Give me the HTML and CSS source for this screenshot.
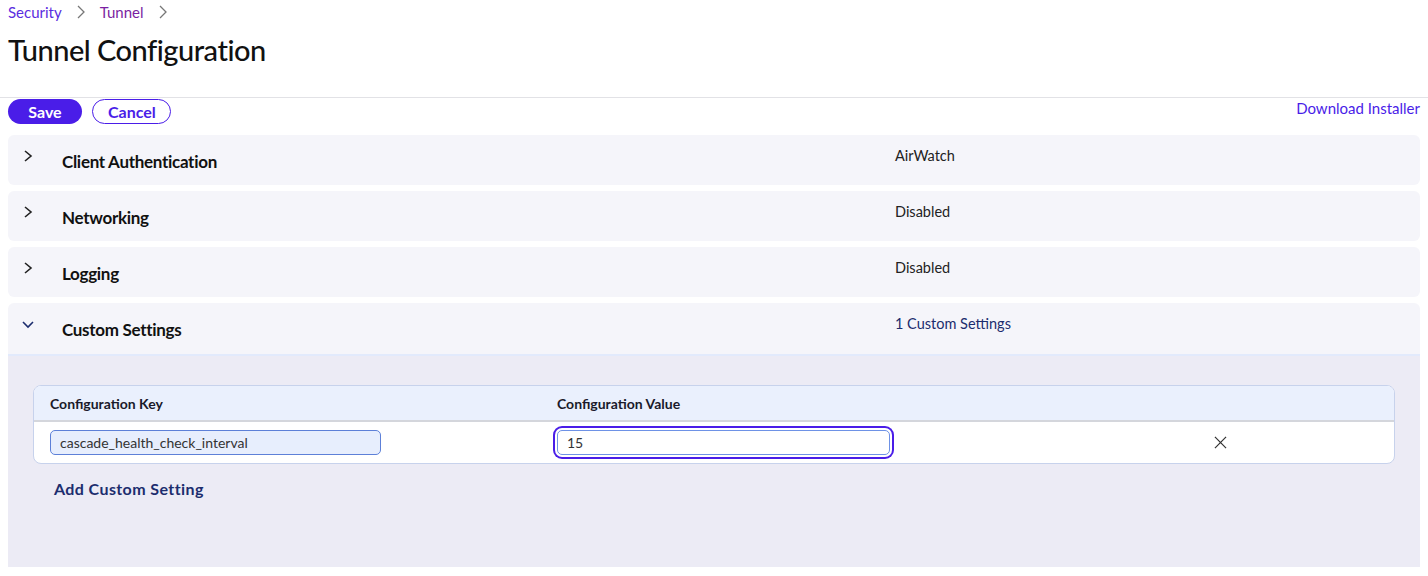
FILE: index.html
```html
<!DOCTYPE html>
<html lang="en">
<head>
  <meta charset="UTF-8" />
  <title>Tunnel Configuration</title>
  <link rel="stylesheet" href="styles.css">
</head>
<body>

  <!-- Header -->
  <div class="page-head">
    <nav class="crumbs">
      <a href="#" class="crumb">Security</a>
      <svg class="crumb-sep" viewBox="0 0 10 14"><path d="M2 1l6 6-6 6" /></svg>
      <a href="#" class="crumb current">Tunnel</a>
      <svg class="crumb-sep" viewBox="0 0 10 14"><path d="M2 1l6 6-6 6" /></svg>
    </nav>
    <h1>Tunnel Configuration</h1>
  </div>

  <!-- Toolbar -->
  <div class="toolbar">
    <div class="actions">
      <button class="btn primary">Save</button>
      <button class="btn outline">Cancel</button>
    </div>
    <a href="#" class="download">Download Installer</a>
  </div>

  <!-- Sections -->
  <div class="sections">
    <div class="section">
      <div class="section-head">
        <svg class="chev" viewBox="0 0 12 12"><path d="M3 1l6 5-6 5" /></svg>
        <span class="section-title">Client Authentication</span>
        <span class="section-value">AirWatch</span>
      </div>
    </div>

    <div class="section">
      <div class="section-head">
        <svg class="chev" viewBox="0 0 12 12"><path d="M3 1l6 5-6 5" /></svg>
        <span class="section-title">Networking</span>
        <span class="section-value">Disabled</span>
      </div>
    </div>

    <div class="section">
      <div class="section-head">
        <svg class="chev" viewBox="0 0 12 12"><path d="M3 1l6 5-6 5" /></svg>
        <span class="section-title">Logging</span>
        <span class="section-value">Disabled</span>
      </div>
    </div>

    <div class="section open">
      <div class="section-head">
        <svg class="chev" viewBox="0 0 12 12"><path d="M1 4l5 5 5-5" /></svg>
        <span class="section-title">Custom Settings</span>
        <span class="section-value link">1 Custom Settings</span>
      </div>
      <div class="section-body">
        <div class="kv-table">
          <div class="kv-row kv-header">
            <div class="kv-key">Configuration Key</div>
            <div class="kv-val">Configuration Value</div>
            <div class="kv-del"></div>
          </div>
          <div class="kv-row">
            <div class="kv-key"><input class="field filled" type="text" value="cascade_health_check_interval" /></div>
            <div class="kv-val"><input class="field focused" type="text" value="15" /></div>
            <div class="kv-del">
              <svg class="x-icon" viewBox="0 0 14 14"><path d="M1 1l12 12M13 1L1 13" /></svg>
            </div>
          </div>
        </div>
        <a href="#" class="add-setting">Add Custom Setting</a>
      </div>
    </div>
  </div>

</body>
</html>
```

FILE: styles.css
```css
body {
  margin: 0;
  font-family: 'Lato', 'Noto Sans', sans-serif;
  color: #111;
  background: #fff;
}

a {
  text-decoration: none;
}

.page-head {
  padding: 2px 8px 0;
  height: 95px;
  border-bottom: 1px solid #e2e2e6;
}

.crumbs {
  display: flex;
  align-items: center;
  font-size: 15px;
  height: 20px;
}

.crumb {
  color: #5a2de0;
}

.crumb.current {
  color: #7b1fa2;
}

.crumb-sep {
  width: 10px;
  height: 14px;
  fill: none;
  stroke: #777;
  stroke-width: 1.3;
  margin: 0 14px;
}

h1 {
  margin: 10px 0 0;
  font-size: 29px;
  font-weight: 500;
  letter-spacing: -0.5px;
}

.toolbar {
  display: flex;
  justify-content: space-between;
  align-items: flex-start;
  padding: 1px 8px 0;
}

.actions {
  display: flex;
  gap: 10px;
}

.btn {
  font-family: inherit;
  font-size: 16px;
  font-weight: 700;
  height: 25px;
  border-radius: 13px;
  padding: 0 15px;
  cursor: pointer;
}

.btn.primary {
  background: #4a1de8;
  color: #fff;
  border: none;
  width: 74px;
}

.btn.outline {
  background: #fff;
  color: #4a1de8;
  border: 1.5px solid #4a1de8;
  width: 79px;
}

.download {
  color: #4a1de8;
  font-size: 15px;
}

.sections {
  padding: 11px 8px 0;
  display: flex;
  flex-direction: column;
  gap: 6px;
}

.section-head {
  display: flex;
  align-items: flex-start;
  height: 50px;
  box-sizing: border-box;
  background: #f5f5fa;
  border-radius: 6px;
  padding: 12px 0 0 14px;
}

.chev {
  width: 12px;
  height: 12px;
  fill: none;
  stroke: #222;
  stroke-width: 1.6;
  margin-top: 3px;
}

.section.open .chev {
  stroke: #1c2d6e;
}

.section-title {
  font-size: 17px;
  font-weight: 700;
  letter-spacing: -0.3px;
  margin: 4px 0 0 28px;
  width: 833px;
}

.section-value {
  font-size: 14.5px;
  color: #222;
}

.section-value.link {
  color: #1c2d6e;
}

.section.open .section-head {
  border-radius: 6px 6px 0 0;
  border-bottom: 2px solid #e2eafc;
  height: 53px;
}

.section-body {
  background: #ecebf5;
  padding: 29px 25px 0;
  height: 211px;
  box-sizing: border-box;
}

.kv-table {
  border: 1.5px solid #c7d2ec;
  border-radius: 8px;
  overflow: hidden;
  background: #fff;
}

.kv-row {
  display: grid;
  grid-template-columns: 507px 640px 1fr;
  align-items: center;
  padding-left: 16px;
}

.kv-header {
  background: #eaf0fd;
  height: 34px;
  border-bottom: 2px solid #d4d6dc;
  font-size: 14px;
  font-weight: 700;
  color: #1a1a2a;
}

.kv-row:not(.kv-header) {
  height: 41px;
}

.field {
  font-family: inherit;
  font-size: 14px;
  color: #333;
  height: 25px;
  box-sizing: border-box;
  border-radius: 5px;
  padding: 0 9px;
  outline: none;
}

.field.filled {
  width: 331px;
  background: #e7eefd;
  border: 1.5px solid #5d80d8;
}

.field.focused {
  width: 333px;
  background: #fff;
  border: 1.5px solid #6e92e6;
  box-shadow: 0 0 0 2px #fff, 0 0 0 4px #4a1de8;
}

.kv-del {
  padding-left: 17px;
}

.x-icon {
  width: 13px;
  height: 13px;
  fill: none;
  stroke: #333;
  stroke-width: 1.3;
  display: block;
}

.add-setting {
  display: inline-block;
  margin: 15px 0 0 21px;
  color: #1c2d6e;
  font-size: 16px;
  font-weight: 700;
  letter-spacing: 0.4px;
}
```
